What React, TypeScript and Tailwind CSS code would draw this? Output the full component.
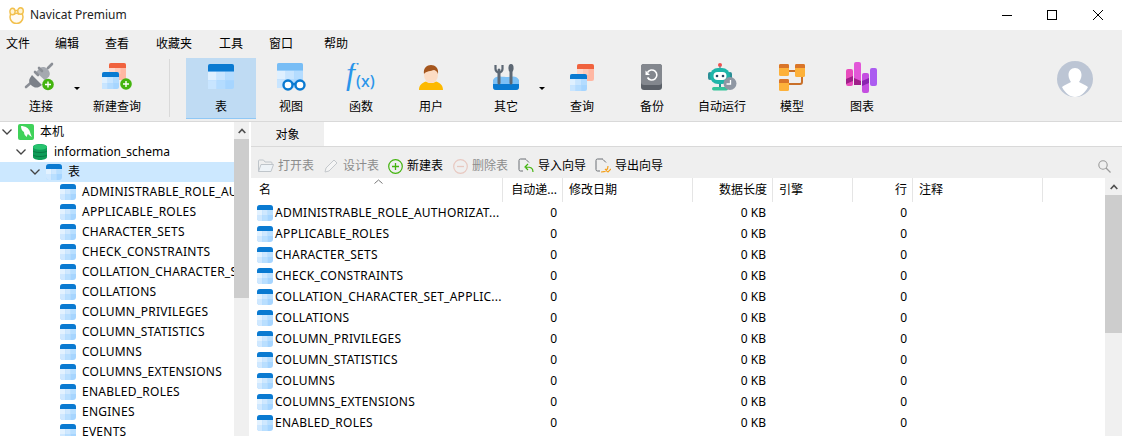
import React from "react";

const tableNames = [
  "ADMINISTRABLE_ROLE_AUTHORIZATIONS",
  "APPLICABLE_ROLES",
  "CHARACTER_SETS",
  "CHECK_CONSTRAINTS",
  "COLLATION_CHARACTER_SET_APPLICABILITY",
  "COLLATIONS",
  "COLUMN_PRIVILEGES",
  "COLUMN_STATISTICS",
  "COLUMNS",
  "COLUMNS_EXTENSIONS",
  "ENABLED_ROLES",
  "ENGINES",
  "EVENTS",
];

const shortNames: Record<string, string> = {
  ADMINISTRABLE_ROLE_AUTHORIZATIONS: "ADMINISTRABLE_ROLE_AUTHORIZAT...",
  COLLATION_CHARACTER_SET_APPLICABILITY: "COLLATION_CHARACTER_SET_APPLIC...",
};

// small blue table glyph used in the tree and the grid
function SmallTable() {
  return (
    <svg width="16" height="16" viewBox="0 0 16 16" className="shrink-0">
      <rect width="16" height="16" rx="3" fill="#a6d5ff" />
      <path d="M0 5h5.3v5H0z" fill="#e3f2ff" />
      <path d="M5.3 5h5.4v5H5.3z" fill="#cfe8ff" />
      <path d="M10.7 5H16v5h-5.3z" fill="#b9dfff" />
      <path d="M0 10h5.3v6H3a3 3 0 0 1-3-3z" fill="#cfe8ff" />
      <path d="M5.3 10h5.4v6H5.3z" fill="#b9dfff" />
      <path d="M3 0h10a3 3 0 0 1 3 3v2H0V3a3 3 0 0 1 3-3z" fill="#0a7ad1" />
    </svg>
  );
}

function GreenPlus({ cx, cy }: { cx: number; cy: number }) {
  return (
    <g>
      <circle cx={cx} cy={cy} r="5.8" fill="#43b40e" />
      <path d={`M${cx - 3} ${cy}h6M${cx} ${cy - 3}v6`} stroke="#fff" strokeWidth="1.4" />
    </g>
  );
}

function MiniGrid({ x, y, w, h, top }: { x: number; y: number; w: number; h: number; top: string }) {
  const cw = w / 3;
  const th = h * 0.3;
  const ch = (h - th) / 2;
  return (
    <g>
      <rect x={x} y={y} width={w} height={h} rx="2" fill="#a6d5ff" />
      <rect x={x} y={y + th} width={cw} height={ch} fill="#dff0ff" />
      <rect x={x + cw} y={y + th} width={cw} height={ch} fill="#c8e5ff" />
      <rect x={x + 2 * cw} y={y + th} width={cw} height={ch} fill="#b4dcff" />
      <rect x={x} y={y + th + ch} width={cw} height={ch} fill="#c8e5ff" />
      <rect x={x + cw} y={y + th + ch} width={cw} height={ch} fill="#b4dcff" />
      <path
        d={`M${x + 2} ${y}h${w - 4}a2 2 0 0 1 2 2v${th - 2}h-${w}v-${th - 2}a2 2 0 0 1 2-2z`}
        fill={top}
      />
    </g>
  );
}

function OrangeGrid({ x, y }: { x: number; y: number }) {
  return (
    <g>
      <rect x={x} y={y} width="17" height="17" rx="2" fill="#ffb7a3" />
      <rect x={x} y={y + 5} width="6" height="6" fill="#ffd7cb" />
      <rect x={x + 6} y={y + 5} width="5.5" height="6" fill="#ffc9b8" />
      <path d={`M${x + 2} ${y}h13a2 2 0 0 1 2 2v3H${x}V${y + 2}a2 2 0 0 1 2-2z`} fill="#f0623e" />
    </g>
  );
}

const icons: Record<string, React.ReactNode> = {
  connect: (
    <svg width="34" height="30" viewBox="0 0 34 30">
      <path d="M2 25l7-6" stroke="#8b8f96" strokeWidth="2.6" strokeLinecap="round" />
      <path d="M8 13l10 10-3 2c-3 1.500-6 0-8-2s-2.500-5-1-7z" fill="#7b8088" />
      <path d="M12 10l4-4c2-1.500 5-1.500 7.500 1s3 5.500 1.500 7.500l-4 4z" fill="#a5a9b0" />
      <path d="M14 13l-3-3M18 9l-3-3M24 6l4-4" stroke="#8b8f96" strokeWidth="2.6" strokeLinecap="round" />
      <GreenPlus cx={24} cy={22.500} />
    </svg>
  ),
  newQuery: (
    <svg width="34" height="30" viewBox="0 0 34 30">
      <OrangeGrid x={9} y={1} />
      <MiniGrid x={2} y={10} w={17} h={17} top="#0a7ad1" />
      <GreenPlus cx={26} cy={22} />
    </svg>
  ),
  table: (
    <svg width="26" height="26" viewBox="0 0 26 26">
      <MiniGrid x={0} y={0} w={26} h={25} top="#0a7ad1" />
    </svg>
  ),
  view: (
    <svg width="30" height="28" viewBox="0 0 30 28">
      <MiniGrid x={1} y={0} w={26} h={25} top="#78bdf5" />
      <circle cx="12" cy="22" r="4.500" fill="#fff" stroke="#0a7ad1" strokeWidth="2.4" />
      <circle cx="24" cy="22" r="4.500" fill="#fff" stroke="#0a7ad1" strokeWidth="2.4" />
      <path d="M16 21h4" stroke="#0a7ad1" strokeWidth="2.4" />
    </svg>
  ),
  func: (
    <svg width="34" height="28" viewBox="0 0 34 28">
      <text x="2" y="21" fontFamily="Liberation Serif" fontStyle="italic" fontSize="32" fill="#2a95ea">f</text>
      <text x="12" y="24" fontFamily="Noto Sans" fontSize="16" fontWeight="500" fill="#2a95ea">(x)</text>
    </svg>
  ),
  user: (
    <svg width="26" height="28" viewBox="0 0 26 28">
      <path d="M1 27c0-5 3-7 7-8.500 3 2 7 2 10 0 4 1.500 7 3.500 7 8.500z" fill="#fdb900" />
      <ellipse cx="13" cy="12" rx="7" ry="8" fill="#fcdcc4" />
      <path d="M6 11c-1-6 3-9 7-9s8 3 7 9c-1-3-3-4-4-4-3 1-8 1-10 4z" fill="#a5561e" />
    </svg>
  ),
  other: (
    <svg width="28" height="28" viewBox="0 0 28 28">
      <path d="M1 17c3-5 6-3 13-3s10-2 13 3v7a3 3 0 0 1-3 3H4a3 3 0 0 1-3-3z" fill="#7cc0f5" />
      <path d="M1 21h26v3a3 3 0 0 1-3 3H4a3 3 0 0 1-3-3z" fill="#0a7ad1" />
      <path d="M7 7v13M19 3v17" stroke="#5d6874" strokeWidth="3" strokeLinecap="round" />
      <path d="M3.500 2v4a3.500 3.500 0 0 0 7 0V2" fill="none" stroke="#5d6874" strokeWidth="2.200" />
      <ellipse cx="19" cy="5" rx="2.600" ry="4" fill="#5d6874" />
    </svg>
  ),
  query: (
    <svg width="26" height="28" viewBox="0 0 26 28">
      <OrangeGrid x={8} y={1} />
      <MiniGrid x={1} y={11} w={17} h={17} top="#0a7ad1" />
    </svg>
  ),
  backup: (
    <svg width="22" height="27" viewBox="0 0 22 27">
      <rect x="0" y="0" width="21" height="26" rx="3" fill="#5b6068" />
      <rect x="0" y="0" width="21" height="21" rx="3" fill="#83878e" />
      <path d="M6.500 8.500a5 5 0 1 1 0 5" fill="none" stroke="#fff" strokeWidth="1.600" />
      <path d="M4.500 6.500v4.500h4.500z" fill="#fff" />
    </svg>
  ),
  robot: (
    <svg width="32" height="28" viewBox="0 0 32 28">
      <circle cx="14" cy="2" r="2" fill="#f0504f" />
      <path d="M14 3v3" stroke="#7a8a90" strokeWidth="1.500" />
      <rect x="2" y="9" width="4" height="8" rx="2" fill="#2a8f96" />
      <rect x="22" y="9" width="4" height="8" rx="2" fill="#2a8f96" />
      <rect x="4" y="5" width="20" height="16" rx="8" fill="#1fb5a9" />
      <rect x="7.500" y="9" width="13" height="8" rx="4" fill="#fff" />
      <circle cx="11" cy="13" r="1.300" fill="#2c4a66" />
      <circle cx="17" cy="13" r="1.300" fill="#2c4a66" />
      <rect x="13" y="21" width="2" height="3" fill="#2a8f96" />
      <rect x="6" y="24" width="16" height="3.500" rx="1.700" fill="#34c49a" />
      <circle cx="24" cy="20.500" r="6.500" fill="#8f97a3" />
      <path d="M24.500 17v4h-4" fill="none" stroke="#fff" strokeWidth="1.300" />
    </svg>
  ),
  model: (
    <svg width="28" height="28" viewBox="0 0 28 28">
      <path d="M10 8h8M24 12v7a2 2 0 0 1-2 2h-12" fill="none" stroke="#c9702a" strokeWidth="2" />
      <rect x="1" y="1" width="10" height="12" rx="1.500" fill="#fdb13a" />
      <path d="M2.500 1h7A1.500 1.500 0 0 1 11 2.500V5H1V2.500A1.500 1.500 0 0 1 2.500 1z" fill="#d9752a" />
      <rect x="17" y="1" width="10" height="13" rx="1.500" fill="#fdb13a" />
      <path d="M18.500 1h7A1.500 1.500 0 0 1 27 2.500V5H17V2.500A1.500 1.500 0 0 1 18.500 1z" fill="#d9752a" />
      <rect x="1" y="16" width="10" height="12" rx="1.500" fill="#fdb13a" />
      <path d="M2.500 16h7a1.500 1.500 0 0 1 1.500 1.500V20H1v-2.500A1.500 1.500 0 0 1 2.500 16z" fill="#d9752a" />
    </svg>
  ),
  chart: (
    <svg width="32" height="32" viewBox="0 0 32 32">
      <rect x="0" y="8" width="7" height="17" rx="2" fill="#e84bbd" />
      <path d="M0 18l7-3v5l-7 3z" fill="#a01f8a" />
      <rect x="8" y="1" width="7" height="23" rx="2" fill="#e257d8" />
      <path d="M8 17l7 3v4H8z" fill="#a01f8a" />
      <rect x="16" y="12" width="7" height="20" rx="2" fill="#c44fe0" />
      <path d="M16 20l7-3v5l-7 3z" fill="#8a26b0" />
      <rect x="24" y="7" width="7" height="18" rx="2" fill="#ab5cf0" />
    </svg>
  ),
};

interface ToolItem {
  label: string;
  icon: string;
  active?: boolean;
  caret?: boolean;
  shifted?: boolean;
}

const primaryTools: ToolItem[] = [
  { label: "连接", icon: "connect", caret: true },
  { label: "新建查询", icon: "newQuery" },
];

const objectTools: ToolItem[] = [
  { label: "表", icon: "table", active: true },
  { label: "视图", icon: "view" },
  { label: "函数", icon: "func" },
  { label: "用户", icon: "user" },
  { label: "其它", icon: "other", caret: true, shifted: true },
  { label: "查询", icon: "query" },
  { label: "备份", icon: "backup" },
  { label: "自动运行", icon: "robot" },
  { label: "模型", icon: "model" },
  { label: "图表", icon: "chart" },
];

function ToolButton({ item }: { item: ToolItem }) {
  return (
    <>
      <div
        className={`flex h-[61px] w-[70px] shrink-0 flex-col items-center ${
          item.active ? "border-b border-[#90c8f5] bg-[#bfdbf3]" : ""
        } ${item.shifted ? "ml-[5px]" : ""}`}
      >
        <div className="flex h-[38px] items-center justify-center">{icons[item.icon]}</div>
        <div className="mt-[2px] text-xs leading-[18px] text-black">{item.label}</div>
      </div>
      {item.caret && (
        <div className="flex h-[61px] w-[6px] shrink-0 items-start pt-[29px]">
          <div className="-ml-[2px] h-0 w-0 border-x-[3px] border-t-[3px] border-x-transparent border-t-black" />
        </div>
      )}
    </>
  );
}

function Chevron({ left }: { left: string }) {
  return (
    <svg width="10" height="6" viewBox="0 0 10 6" className={`absolute top-[7px] ${left}`}>
      <path d="M0.500 0.500L5 5l4.500-4.500" fill="none" stroke="#444" strokeWidth="1.300" />
    </svg>
  );
}

function ScrollButton() {
  return (
    <div className="flex h-[17px] items-center justify-center">
      <svg width="8" height="6" viewBox="0 0 8 6">
        <path d="M0.700 5L4 1.500 7.300 5" fill="none" stroke="#505050" strokeWidth="1.700" />
      </svg>
    </div>
  );
}

function Sidebar() {
  return (
    <div className="flex h-full w-[251px] shrink-0">
      <div className="w-[234px] shrink-0 overflow-hidden text-xs text-black">
        <div className="relative flex h-5 items-center pl-[18px]">
          <Chevron left="left-[2px]" />
          <svg width="16" height="16" viewBox="0 0 16 16" className="shrink-0">
            <rect width="16" height="16" rx="2" fill="#3fd25a" />
            <path
              d="M3 2c4 0 8 2 9 6 .5 2 1 3 2 5-2-1-3-2-4-3-1 1-1 2-1 3-2-1-3-3-3-5C4 7 3 5 3 2z"
              fill="#fff"
            />
          </svg>
          <span className="ml-[6px]">本机</span>
        </div>
        <div className="relative flex h-5 items-center pl-[33px]">
          <Chevron left="left-[16px]" />
          <svg width="14" height="16" viewBox="0 0 14 16" className="shrink-0">
            <path d="M0 3c0-4 14-4 14 0v10c0 4-14 4-14 0z" fill="#0f9d58" />
            <ellipse cx="7" cy="3" rx="7" ry="2.800" fill="#27c46f" />
            <path d="M0 7c2 2 12 2 14 0M0 11c2 2 12 2 14 0" fill="none" stroke="#0a7a44" strokeWidth="1" />
          </svg>
          <span className="ml-[7px]">information_schema</span>
        </div>
        <div className="relative flex h-5 items-center bg-[#cce8ff] pl-[46px]">
          <Chevron left="left-[30px]" />
          <SmallTable />
          <span className="ml-[6px]">表</span>
        </div>
        {tableNames.map((name) => (
          <div key={name} className="flex h-5 items-center pl-[60px] whitespace-nowrap">
            <SmallTable />
            <span className="ml-[6px] tracking-[0.25px]">{name}</span>
          </div>
        ))}
      </div>
      <div className="w-[15px] shrink-0 bg-[#f0f0f0]">
        <ScrollButton />
        <div className="h-[159px] bg-[#cdcdcd]" />
      </div>
    </div>
  );
}

const actionClass = "flex items-center gap-1 text-xs";

function ObjectToolbar() {
  return (
    <div className="flex h-[31px] shrink-0 items-center justify-between bg-[#efefef] pl-[7px] pr-[11px] pt-[7px]">
      <div className="flex items-center">
        <div className={`${actionClass} w-[65px] text-[#8c8c8c]`}>
          <svg width="16" height="14" viewBox="0 0 16 14">
            <path d="M.5 12.500V2a1 1 0 0 1 1-1h4l1.500 2h6a1 1 0 0 1 1 1v1.500" fill="none" stroke="#bfc5ca" />
            <path d="M.5 12.500L3 5.500h12.500L13 12.500z" fill="#eef3f7" stroke="#bfc5ca" />
          </svg>
          <span>打开表</span>
        </div>
        <div className={`${actionClass} w-[65px] text-[#8c8c8c]`}>
          <svg width="16" height="16" viewBox="0 0 16 16">
            <path d="M2 14l1-4 8-8 3 3-8 8z" fill="#f5f5f5" stroke="#c4c8cc" />
          </svg>
          <span>设计表</span>
        </div>
        <div className={`${actionClass} w-[65px] text-black`}>
          <svg width="15" height="15" viewBox="0 0 15 15">
            <circle cx="7.500" cy="7.500" r="6.800" fill="none" stroke="#43b40e" strokeWidth="1.200" />
            <path d="M7.500 4v7M4 7.500h7" stroke="#43b40e" strokeWidth="1.300" />
          </svg>
          <span>新建表</span>
        </div>
        <div className={`${actionClass} w-[65px] text-[#8c8c8c]`}>
          <svg width="15" height="15" viewBox="0 0 15 15">
            <circle cx="7.500" cy="7.500" r="6.800" fill="none" stroke="#e8c8c0" strokeWidth="1.200" />
            <path d="M4 7.500h7" stroke="#e8c8c0" strokeWidth="1.300" />
          </svg>
          <span>删除表</span>
        </div>
        <div className={`${actionClass} w-[77px] text-black`}>
          <svg width="16" height="16" viewBox="0 0 16 16">
            <path d="M8 1H2.500a1.500 1.500 0 0 0-1.500 1.500v9A1.500 1.500 0 0 0 2.500 13H5" fill="none" stroke="#6b6f74" />
            <path d="M8 1.500l3 3" stroke="#6b6f74" />
            <path d="M15 14c0-4-2-5-7-5M10 6L7 9l3 3" fill="none" stroke="#43b40e" strokeWidth="1.200" />
          </svg>
          <span>导入向导</span>
        </div>
        <div className={`${actionClass} text-black`}>
          <svg width="16" height="16" viewBox="0 0 16 16">
            <path d="M8 1H2.500a1.500 1.500 0 0 0-1.500 1.500v9A1.500 1.500 0 0 0 2.500 13H5" fill="none" stroke="#6b6f74" />
            <path d="M8 1.500l3 3" stroke="#6b6f74" />
            <path d="M6 14c4 0 7-1 7-6M10 11l3 3 3-3" fill="none" stroke="#f5a11c" strokeWidth="1.200" />
          </svg>
          <span>导出向导</span>
        </div>
      </div>
      <svg width="13" height="13" viewBox="0 0 13 13">
        <circle cx="5" cy="5" r="4.200" fill="none" stroke="#9a9a9a" strokeWidth="1.100" />
        <path d="M8 8l4.500 4.500" stroke="#9a9a9a" strokeWidth="1.300" />
      </svg>
    </div>
  );
}

const rowGrid = "grid grid-cols-[252px_60px_130px_80px_80px_60px_130px] text-xs text-black";

function ObjectGrid() {
  const headCell = "flex h-6 items-center border-r border-[#e5e5e5]";
  return (
    <div className="flex min-h-0 flex-1">
      <div className="min-w-0 flex-1 overflow-hidden">
        <div className={`${rowGrid} relative h-6`}>
          <div className={`${headCell} pl-2`}>名</div>
          <div className={`${headCell} justify-end pr-[5px]`}>自动递...</div>
          <div className={`${headCell} pl-[6px]`}>修改日期</div>
          <div className={`${headCell} justify-end pr-[5px]`}>数据长度</div>
          <div className={`${headCell} pl-[6px]`}>引擎</div>
          <div className={`${headCell} justify-end pr-[5px]`}>行</div>
          <div className={`${headCell} pl-[6px]`}>注释</div>
          <svg width="9" height="5" viewBox="0 0 9 5" className="absolute top-[1px] left-[123px]">
            <path d="M.5 4.500L4.500 1l4 3.500" fill="none" stroke="#777" />
          </svg>
        </div>
        {tableNames.slice(0, 12).map((name) => (
          <div key={name} className={`${rowGrid} h-[21px] items-center`}>
            <div className="flex items-center gap-[2px] pl-[6px] whitespace-nowrap">
              <SmallTable />
              <span className="tracking-[0.25px]">{shortNames[name] ?? name}</span>
            </div>
            <div className="pr-[6px] text-right">0</div>
            <div />
            <div className="pr-[7px] text-right">0 KB</div>
            <div />
            <div className="pr-[6px] text-right">0</div>
            <div />
          </div>
        ))}
      </div>
      <div className="w-[17px] shrink-0 bg-[#f0f0f0]">
        <ScrollButton />
        <div className="h-[138px] bg-[#cdcdcd]" />
      </div>
    </div>
  );
}

export default function App() {
  return (
    <div
      className="flex h-[436px] w-[1122px] flex-col overflow-hidden bg-white"
      style={{ fontFamily: '"Noto Sans", "Noto Sans CJK SC", sans-serif' }}
    >
      {/* Title bar */}
      <div className="flex h-[30px] shrink-0 items-center justify-between bg-white">
        <div className="flex items-center pl-[8px]">
          <svg width="17" height="17" viewBox="0 0 17 17">
            <circle cx="8.500" cy="10" r="6.500" fill="#fffaf0" stroke="#f2c04d" strokeWidth="1.500" />
            <ellipse cx="4.500" cy="4.500" rx="2.600" ry="3.300" fill="#fff3d0" stroke="#f2c04d" strokeWidth="1.400" />
            <ellipse cx="12.500" cy="4" rx="2.800" ry="3.200" fill="#fff3d0" stroke="#f2c04d" strokeWidth="1.400" />
            <path d="M6 7.500c1.500-1.500 3.500-1.500 5 0" fill="none" stroke="#f2c04d" strokeWidth="1.200" />
          </svg>
          <span className="ml-[5px] text-xs text-[#222]">Navicat Premium</span>
        </div>
        <div className="flex items-center pr-[19px]">
          <div className="mr-[35px] h-px w-[10px] bg-black" />
          <div className="mr-[36px] h-[10px] w-[10px] border border-black" />
          <svg width="10" height="10" viewBox="0 0 10 10">
            <path d="M0 0l10 10M10 0L0 10" stroke="#000" strokeWidth="1" />
          </svg>
        </div>
      </div>

      {/* Menu and toolbar */}
      <div className="h-[92px] shrink-0 border-b border-[#d9d9d9] bg-[#efefef]">
        <div className="flex h-[28px] items-center pl-[6px] text-xs text-black">
          <span className="w-[49px]">文件</span>
          <span className="w-[50px]">编辑</span>
          <span className="w-[51px]">查看</span>
          <span className="w-[63px]">收藏夹</span>
          <span className="w-[50px]">工具</span>
          <span className="w-[55px]">窗口</span>
          <span>帮助</span>
        </div>
        <div className="flex items-start pl-[6px]">
          {primaryTools.map((item) => (
            <ToolButton key={item.label} item={item} />
          ))}
          <div className="ml-[17px] mr-[16px] mt-[1px] h-[58px] w-px bg-[#d9d9d9]" />
          {objectTools.map((item) => (
            <ToolButton key={item.label} item={item} />
          ))}
          <div className="ml-auto mr-[29px] mt-[3px]">
            <svg width="36" height="36" viewBox="0 0 36 36">
              <circle cx="18" cy="18" r="18" fill="#bcc5d4" />
              <path d="M18 7c4 0 6.500 3 6.500 7 0 3-1.500 5.500-2.500 7 3 2 7 3 9 5-3 6-8 10-13 10S8 32 5 26c2-2 6-3 9-5-1-1.500-2.500-4-2.500-7 0-4 2.500-7 6.500-7z" fill="#fff" />
            </svg>
          </div>
        </div>
      </div>

      {/* Main area */}
      <div className="flex min-h-0 flex-1">
        <Sidebar />
        <div className="flex min-w-0 flex-1 flex-col">
          <div className="flex h-[25px] shrink-0 border-b border-[#d9d9d9]">
            <div className="flex w-[73px] items-center justify-center bg-[#efefef] pt-[2px] text-xs text-black">对象</div>
          </div>
          <ObjectToolbar />
          <ObjectGrid />
        </div>
      </div>
    </div>
  );
}
